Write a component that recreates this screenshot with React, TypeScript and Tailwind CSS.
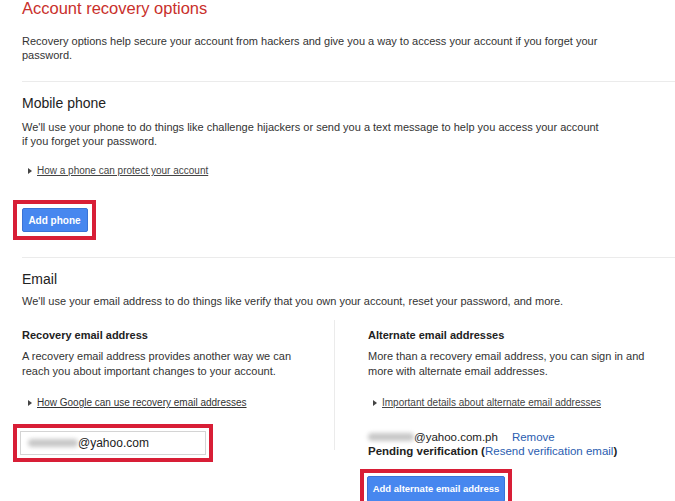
import React from "react";

const Tri = () => (
  <svg width="4" height="6" viewBox="0 0 4 6" className="mr-[5px] shrink-0">
    <path d="M0 0 L4 3 L0 6 Z" fill="#444" />
  </svg>
);

export default function App() {
  return (
    <div className="w-[675px] h-[501px] overflow-hidden bg-white text-[#333] font-['Liberation_Sans',Arial,sans-serif] relative">
      <div className="pl-[22px] -mt-[2px]">
        <h1 className="text-[16.5px] leading-[20px] text-[#c9302c]">Account recovery options</h1>
        <p className="mt-[16px] text-[11px] leading-[14px] w-[600px]">
          Recovery options help secure your account from hackers and give you a way to access your account if you forget your password.
        </p>
        <div className="mt-[19px] h-px bg-[#ebebeb]" />
        <h2 className="mt-[12px] text-[14px] leading-[18px] text-[#222]">Mobile phone</h2>
        <p className="mt-[8px] text-[11px] leading-[14px] w-[585px]">
          We'll use your phone to do things like challenge hijackers or send you a text message to help you access your account if you forget your password.
        </p>
        <div className="mt-[17px] ml-[6px] flex items-center text-[10px] leading-[12px] text-[#444]">
          <Tri />
          <span className="underline">How a phone can protect your account</span>
        </div>
      </div>
      <div className="ml-[13px] mt-[23px] w-[83px] h-[40px] border-[4px] border-[#d81e36] bg-white flex items-center justify-center">
        <div className="w-[66px] h-[24px] bg-[#4787ef] border border-[#3a73d6] rounded-[2px] flex items-center justify-center text-white text-[10px] font-bold">
          Add phone
        </div>
      </div>
      <div className="pl-[22px]">
        <div className="mt-[17px] h-px bg-[#ebebeb]" />
        <h2 className="mt-[12px] text-[14px] leading-[18px] text-[#222]">Email</h2>
        <p className="mt-[6px] text-[11px] leading-[14px]">
          We'll use your email address to do things like verify that you own your account, reset your password, and more.
        </p>
        <div className="mt-[20px] flex items-start">
          <div className="w-[313px] border-r border-[#ebebeb] pb-[41px] -mt-[8px] pt-[8px]">
            <h3 className="text-[11px] leading-[14px] font-bold text-[#222]">Recovery email address</h3>
            <p className="mt-[7px] text-[11px] leading-[15px] w-[290px]">
              A recovery email address provides another way we can reach you about important changes to your account.
            </p>
            <div className="mt-[18px] ml-[6px] flex items-center text-[10px] leading-[12px] text-[#333]">
              <Tri />
              <span className="underline">How Google can use recovery email addresses</span>
            </div>
          </div>
          <div className="ml-[33px]">
            <h3 className="text-[11px] leading-[14px] font-bold text-[#222]">Alternate email addresses</h3>
            <p className="mt-[7px] text-[11px] leading-[15px] w-[290px]">
              More than a recovery email address, you can sign in and more with alternate email addresses.
            </p>
            <div className="mt-[18px] ml-[5px] flex items-center text-[10px] leading-[12px] text-[#444]">
              <Tri />
              <span className="underline">Important details about alternate email addresses</span>
            </div>
            <div className="mt-[21px] text-[11.5px] leading-[14px] text-[#222] flex items-center">
              <span className="inline-block w-[46px] h-[8px] bg-[#c8c8c8] blur-[2px] rounded" />
              <span>@yahoo.com.ph</span>
              <span className="ml-[14px] text-[#2a5db0]">Remove</span>
            </div>
            <div className="text-[11.5px] leading-[14px] text-[#222]">
              <span className="font-bold">Pending verification (</span>
              <span className="text-[#2a5db0]">Resend verification email</span>
              <span className="font-bold">)</span>
            </div>
          </div>
        </div>
      </div>
      <div className="absolute left-[13px] top-[424px] w-[200px] h-[38px] border-[4px] border-[#d81e36] bg-white p-[3px]">
        <div className="h-full border border-[#d4d4d4] flex items-center pl-[7px] text-[12px] text-[#222]">
          <span className="inline-block w-[50px] h-[8px] bg-[#c8c8c8] blur-[2px] rounded" />
          <span>@yahoo.com</span>
        </div>
      </div>
      <div className="absolute left-[360px] top-[469px] w-[152px] h-[40px] border-[4px] border-[#d81e36] bg-white p-[3px]">
        <div className="h-[26px] bg-[#4787ef] border border-[#3a73d6] rounded-[2px] flex items-center justify-center text-white text-[9.5px] font-bold">
          Add alternate email address
        </div>
      </div>
    </div>
  );
}
